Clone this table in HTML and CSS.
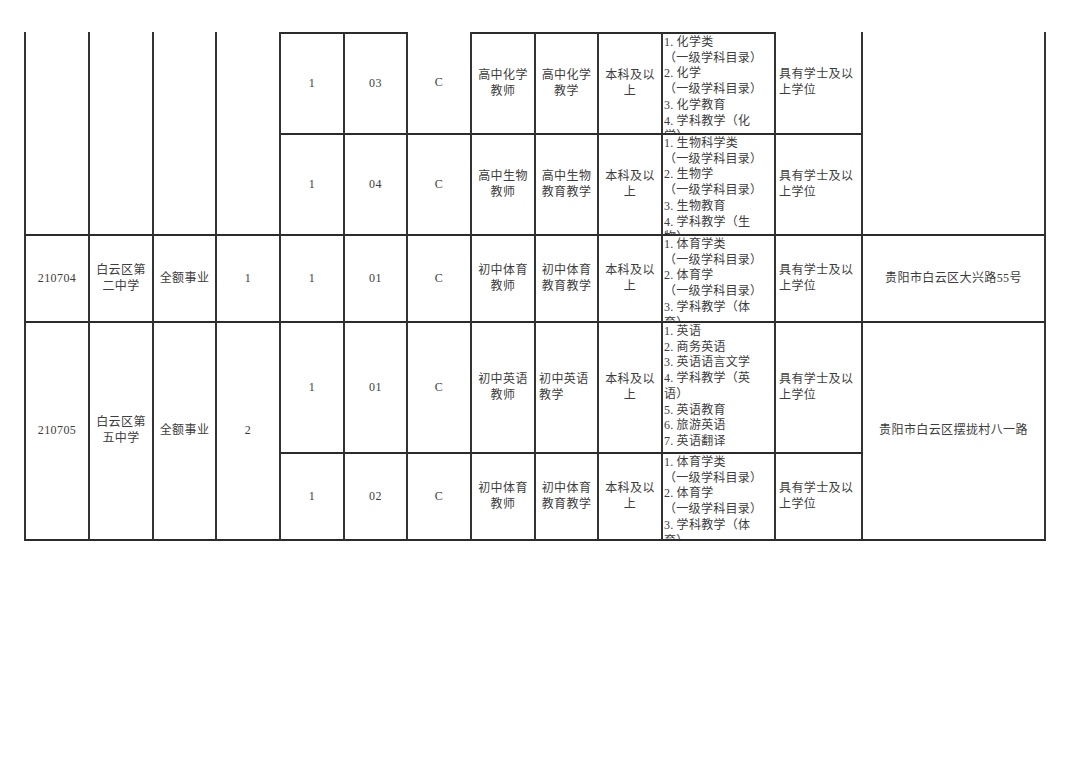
FILE: index.html
```html
<!DOCTYPE html>
<html lang="zh-CN">
<head>
<meta charset="utf-8">
<title>招聘岗位表</title>
<link rel="stylesheet" href="styles.css">
</head>
<body>
<div class="sheet">
  <!-- row 1 -->
  <div class="cell first r2"></div>
  <div class="cell r2"></div>
  <div class="cell r2"></div>
  <div class="cell r2"></div>
  <div class="cell mid top">1</div>
  <div class="cell mid top">03</div>
  <div class="cell mid">C</div>
  <div class="cell mid top">高中化学<br>教师</div>
  <div class="cell mid top">高中化学<br>教学</div>
  <div class="cell mid top">本科及以<br>上</div>
  <div class="cell list top">
    <div><span class="n">1.</span>化学类</div>
    <div>（一级学科目录）</div>
    <div><span class="n">2.</span>化学</div>
    <div>（一级学科目录）</div>
    <div><span class="n">3.</span>化学教育</div>
    <div><span class="n">4.</span>学科教学（化</div>
    <div>学）</div>
  </div>
  <div class="cell left">具有学士及以<br>上学位</div>
  <div class="cell r2"></div>
  <!-- row 2 -->
  <div class="cell mid">1</div>
  <div class="cell mid">04</div>
  <div class="cell mid">C</div>
  <div class="cell mid">高中生物<br>教师</div>
  <div class="cell mid">高中生物<br>教育教学</div>
  <div class="cell mid">本科及以<br>上</div>
  <div class="cell list">
    <div><span class="n">1.</span>生物科学类</div>
    <div>（一级学科目录）</div>
    <div><span class="n">2.</span>生物学</div>
    <div>（一级学科目录）</div>
    <div><span class="n">3.</span>生物教育</div>
    <div><span class="n">4.</span>学科教学（生</div>
    <div>物）</div>
  </div>
  <div class="cell left">具有学士及以<br>上学位</div>
  <!-- row 3 -->
  <div class="cell first mid">210704</div>
  <div class="cell mid">白云区第<br>二中学</div>
  <div class="cell mid">全额事业</div>
  <div class="cell mid">1</div>
  <div class="cell mid">1</div>
  <div class="cell mid">01</div>
  <div class="cell mid">C</div>
  <div class="cell mid">初中体育<br>教师</div>
  <div class="cell mid">初中体育<br>教育教学</div>
  <div class="cell mid">本科及以<br>上</div>
  <div class="cell list">
    <div><span class="n">1.</span>体育学类</div>
    <div>（一级学科目录）</div>
    <div><span class="n">2.</span>体育学</div>
    <div>（一级学科目录）</div>
    <div><span class="n">3.</span>学科教学（体</div>
    <div>育）</div>
  </div>
  <div class="cell left">具有学士及以<br>上学位</div>
  <div class="cell mid">贵阳市白云区大兴路55号</div>
  <!-- row 4 -->
  <div class="cell first mid r2">210705</div>
  <div class="cell mid r2">白云区第<br>五中学</div>
  <div class="cell mid r2">全额事业</div>
  <div class="cell mid r2">2</div>
  <div class="cell mid">1</div>
  <div class="cell mid">01</div>
  <div class="cell mid">C</div>
  <div class="cell mid">初中英语<br>教师</div>
  <div class="cell left">初中英语<br>教学</div>
  <div class="cell mid">本科及以<br>上</div>
  <div class="cell list">
    <div><span class="n">1.</span>英语</div>
    <div><span class="n">2.</span>商务英语</div>
    <div><span class="n">3.</span>英语语言文学</div>
    <div><span class="n">4.</span>学科教学（英</div>
    <div>语）</div>
    <div><span class="n">5.</span>英语教育</div>
    <div><span class="n">6.</span>旅游英语</div>
    <div><span class="n">7.</span>英语翻译</div>
  </div>
  <div class="cell left">具有学士及以<br>上学位</div>
  <div class="cell mid r2">贵阳市白云区摆拢村八一路</div>
  <!-- row 5 -->
  <div class="cell mid">1</div>
  <div class="cell mid">02</div>
  <div class="cell mid">C</div>
  <div class="cell mid">初中体育<br>教师</div>
  <div class="cell mid">初中体育<br>教育教学</div>
  <div class="cell mid">本科及以<br>上</div>
  <div class="cell list">
    <div><span class="n">1.</span>体育学类</div>
    <div>（一级学科目录）</div>
    <div><span class="n">2.</span>体育学</div>
    <div>（一级学科目录）</div>
    <div><span class="n">3.</span>学科教学（体</div>
    <div>育）</div>
  </div>
  <div class="cell left">具有学士及以<br>上学位</div>
</div>
</body>
</html>
```
FILE: styles.css
```css
html, body {
  margin: 0;
  padding: 0;
  background: #ffffff;
}

body {
  width: 1080px;
  height: 764px;
  overflow: hidden;
  font-family: "Liberation Serif", "Noto Sans CJK SC", serif;
  font-size: 12px;
  letter-spacing: 0.4px;
  line-height: 15.7px;
  color: #3d3d3d;
}

.sheet {
  display: grid;
  grid-template-columns: 66px 64px 63px 64px 64px 63px 64px 64px 63px 64px 113px 87px 183px;
  grid-template-rows: 103px 101px 87px 131px 87px;
  margin: 32px 0 0 24px;
  width: max-content;
}

.cell {
  box-sizing: border-box;
  border-right: 2px solid #333333;
  border-bottom: 2px solid #2b2b2b;
  overflow: hidden;
  min-width: 0;
  min-height: 0;
}

.first {
  border-left: 2px solid #333333;
}

.top {
  border-top: 2px solid #2b2b2b;
}

.r2 {
  grid-row: span 2;
}

.mid {
  display: flex;
  align-items: center;
  justify-content: center;
  text-align: center;
}

.left {
  display: flex;
  align-items: center;
  justify-content: flex-start;
  text-align: left;
  padding-left: 3px;
}

.list {
  padding: 1px 0 0 1px;
  white-space: nowrap;
  letter-spacing: 0.3px;
}

.n {
  margin-right: 3px;
}
```
